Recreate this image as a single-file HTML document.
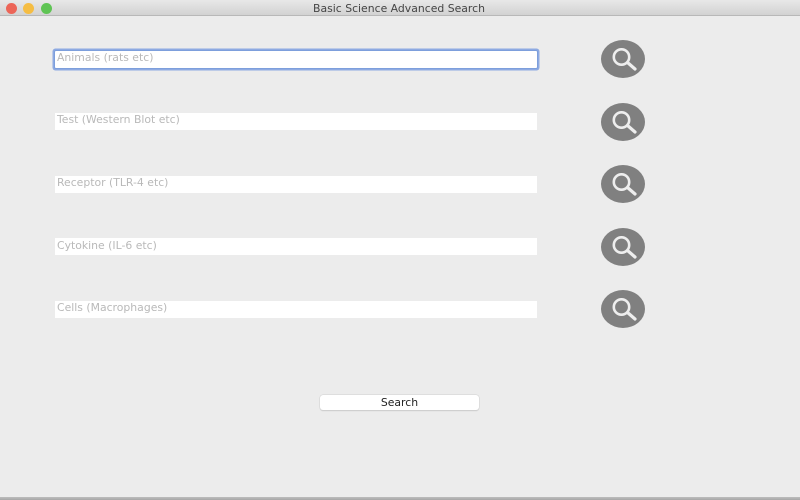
<!DOCTYPE html>
<html><head><meta charset="utf-8">
<style>
html,body{margin:0;padding:0;width:800px;height:500px;overflow:hidden;background:#ececec;font-family:"DejaVu Sans","Liberation Sans",sans-serif}
#bar{position:absolute;left:0;top:0;width:800px;height:15px;background:linear-gradient(#e8e8e8,#d2d2d2);border-bottom:1px solid #b8b8b8;}
#title{position:absolute;left:0;top:0;width:798px;text-align:center;font-size:10.85px;line-height:17px;color:#454545;white-space:nowrap}
.dot{position:absolute;top:2.5px;width:11px;height:11px;border-radius:50%}
.f{position:absolute;left:55px;width:482px;height:17px;background:#fff}
.f span{position:absolute;left:2px;top:-1px;font-size:10.85px;line-height:15px;color:#b9b9b9;white-space:nowrap}
.f.a{box-shadow:0 0 0 1px #7d9fdc,0 0 0 2.5px #8eaae2;border-radius:1px}
svg{position:absolute;left:600px;width:46px;height:38px}
#btn{position:absolute;left:320px;top:395px;width:159px;height:15px;background:#fff;border-radius:3px;box-shadow:0 0 0 .5px #d0d0d0,0 1px 1px #c4c4c4;text-align:center;font-size:10.85px;line-height:16px;color:#222}
#bot{position:absolute;left:0;top:497px;width:800px;height:3px;background:linear-gradient(#bdbdbd,#a6a6a6)}
</style></head><body>
<div id="bar"></div>
<div id="title">Basic Science Advanced Search</div>
<div class="dot" style="left:5.5px;background:#ec6558"></div>
<div class="dot" style="left:23.2px;background:#f5bd43"></div>
<div class="dot" style="left:40.8px;background:#5fc454"></div>

<div class="f a" style="top:51px"><span>Animals (rats etc)</span></div>
<div class="f" style="top:113px"><span>Test (Western Blot etc)</span></div>
<div class="f" style="top:176px"><span>Receptor (TLR-4 etc)</span></div>
<div class="f" style="top:238px"><span style="top:0">Cytokine (IL-6 etc)</span></div>
<div class="f" style="top:301px"><span>Cells (Macrophages)</span></div>

<svg style="top:40px" viewBox="0 0 46 38"><ellipse cx="23" cy="19" rx="22" ry="19" fill="#808080"/><circle cx="21.500" cy="17" r="7.700" fill="none" stroke="#eee" stroke-width="2.600"/><path d="M27.500 22.500L35 29" stroke="#eee" stroke-width="3.200" stroke-linecap="round"/></svg>
<svg style="top:103px" viewBox="0 0 46 38"><ellipse cx="23" cy="19" rx="22" ry="19" fill="#808080"/><circle cx="21.500" cy="17" r="7.700" fill="none" stroke="#eee" stroke-width="2.600"/><path d="M27.500 22.500L35 29" stroke="#eee" stroke-width="3.200" stroke-linecap="round"/></svg>
<svg style="top:165px" viewBox="0 0 46 38"><ellipse cx="23" cy="19" rx="22" ry="19" fill="#808080"/><circle cx="21.500" cy="17" r="7.700" fill="none" stroke="#eee" stroke-width="2.600"/><path d="M27.500 22.500L35 29" stroke="#eee" stroke-width="3.200" stroke-linecap="round"/></svg>
<svg style="top:228px" viewBox="0 0 46 38"><ellipse cx="23" cy="19" rx="22" ry="19" fill="#808080"/><circle cx="21.500" cy="17" r="7.700" fill="none" stroke="#eee" stroke-width="2.600"/><path d="M27.500 22.500L35 29" stroke="#eee" stroke-width="3.200" stroke-linecap="round"/></svg>
<svg style="top:290px" viewBox="0 0 46 38"><ellipse cx="23" cy="19" rx="22" ry="19" fill="#808080"/><circle cx="21.500" cy="17" r="7.700" fill="none" stroke="#eee" stroke-width="2.600"/><path d="M27.500 22.500L35 29" stroke="#eee" stroke-width="3.200" stroke-linecap="round"/></svg>

<div id="btn">Search</div>
<div id="bot"></div>
</body></html>
